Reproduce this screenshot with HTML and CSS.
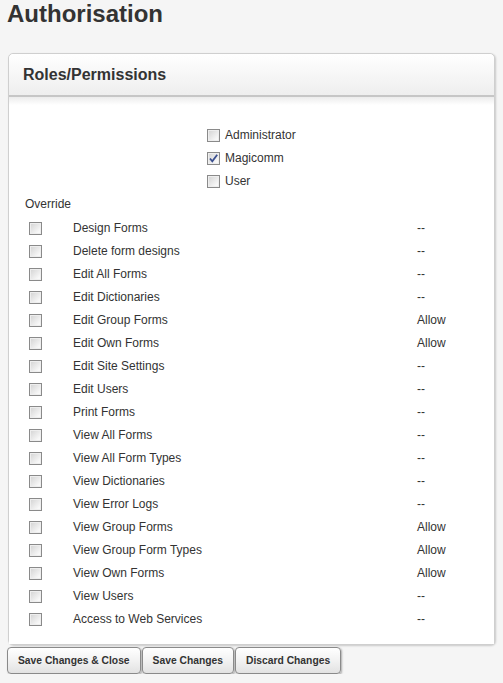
FILE: index.html
```
<!DOCTYPE html>
<html>
<head>
<meta charset="utf-8">
<link rel="stylesheet" href="styles.css">
</head>
<body>
<h1 class="title">Authorisation</h1>
<div class="panel">
  <div class="panel-head">Roles/Permissions</div>
  <div class="panel-body">
    <div class="roles">
      <div class="role"><span class="cb"></span><span>Administrator</span></div>
      <div class="role"><span class="cb checked"><svg viewBox="0 0 11 11" width="11" height="11"><path d="M2 5.5 L4.3 8.3 L9.2 1.8" fill="none" stroke="#3b4f8f" stroke-width="1.8"/></svg></span><span>Magicomm</span></div>
      <div class="role"><span class="cb"></span><span>User</span></div>
    </div>
    <div class="override">Override</div>
    <div class="perms">
      <span class="cb"></span><span>Design Forms</span><span>--</span>
      <span class="cb"></span><span>Delete form designs</span><span>--</span>
      <span class="cb"></span><span>Edit All Forms</span><span>--</span>
      <span class="cb"></span><span>Edit Dictionaries</span><span>--</span>
      <span class="cb"></span><span>Edit Group Forms</span><span>Allow</span>
      <span class="cb"></span><span>Edit Own Forms</span><span>Allow</span>
      <span class="cb"></span><span>Edit Site Settings</span><span>--</span>
      <span class="cb"></span><span>Edit Users</span><span>--</span>
      <span class="cb"></span><span>Print Forms</span><span>--</span>
      <span class="cb"></span><span>View All Forms</span><span>--</span>
      <span class="cb"></span><span>View All Form Types</span><span>--</span>
      <span class="cb"></span><span>View Dictionaries</span><span>--</span>
      <span class="cb"></span><span>View Error Logs</span><span>--</span>
      <span class="cb"></span><span>View Group Forms</span><span>Allow</span>
      <span class="cb"></span><span>View Group Form Types</span><span>Allow</span>
      <span class="cb"></span><span>View Own Forms</span><span>Allow</span>
      <span class="cb"></span><span>View Users</span><span>--</span>
      <span class="cb"></span><span>Access to Web Services</span><span>--</span>
    </div>
  </div>
</div>
<div class="buttons">
  <button class="btn">Save Changes &amp; Close</button>
  <button class="btn">Save Changes</button>
  <button class="btn">Discard Changes</button>
</div>
</body>
</html>
```
FILE: styles.css
```
html, body {
  margin: 0;
  padding: 0;
  background: #f5f5f5;
}
body {
  padding: 0 8px;
  font-family: "Liberation Sans", Arial, sans-serif;
  color: #333;
}
.title {
  margin: 0 0 25px -1px;
  font-size: 24px;
  line-height: 28px;
  font-weight: bold;
  color: #333;
}
.panel {
  width: 485px;
  border: 1px solid #cfcfcf;
  border-radius: 5px;
  background: #fff;
  box-shadow: 1px 1px 2px rgba(0,0,0,0.18);
}
.panel-head {
  height: 40px;
  padding: 1px 0 0 14px;
  font-size: 16px;
  line-height: 40px;
  font-weight: bold;
  color: #333;
  border-radius: 5px 5px 0 0;
  background: linear-gradient(#ffffff, #eeeeee);
  border-bottom: 2px solid #c6c6c6;
}
.panel-body {
  padding: 27px 0 13px 0;
  font-size: 12px;
  background: linear-gradient(#ececec, #ffffff 8px);
}
.roles {
  padding-left: 198px;
}
.role {
  display: flex;
  align-items: center;
  gap: 5px;
  height: 23px;
  line-height: 23px;
}
.override {
  padding-left: 16px;
  line-height: 23px;
  height: 24px;
}
.perms {
  display: grid;
  grid-template-columns: 44px 344px auto;
  grid-auto-rows: 23px;
  align-items: center;
  padding-left: 20px;
  line-height: 23px;
}
.cb {
  display: inline-flex;
  align-items: center;
  justify-content: center;
  box-sizing: border-box;
  width: 13px;
  height: 13px;
  border: 1px solid #8a8a8a;
  background: linear-gradient(135deg, #d2d2d2, #f8f8f8 80%);
  box-shadow: inset 0 0 0 1px #eeeeee;
}
.cb svg {
  display: block;
}
.buttons {
  display: flex;
  gap: 1px;
  margin: 2px 0 0 -1px;
}
.btn {
  height: 27px;
  padding: 0 10px;
  font-family: "Liberation Sans", Arial, sans-serif;
  font-size: 10.3px;
  font-weight: bold;
  color: #333;
  border: 1px solid #8a8a8a;
  border-radius: 4px;
  background: linear-gradient(#ffffff, #f2f2f2 50%, #e2e2e2);
  box-shadow: 1px 1px 2px rgba(0,0,0,0.3);
}
```
